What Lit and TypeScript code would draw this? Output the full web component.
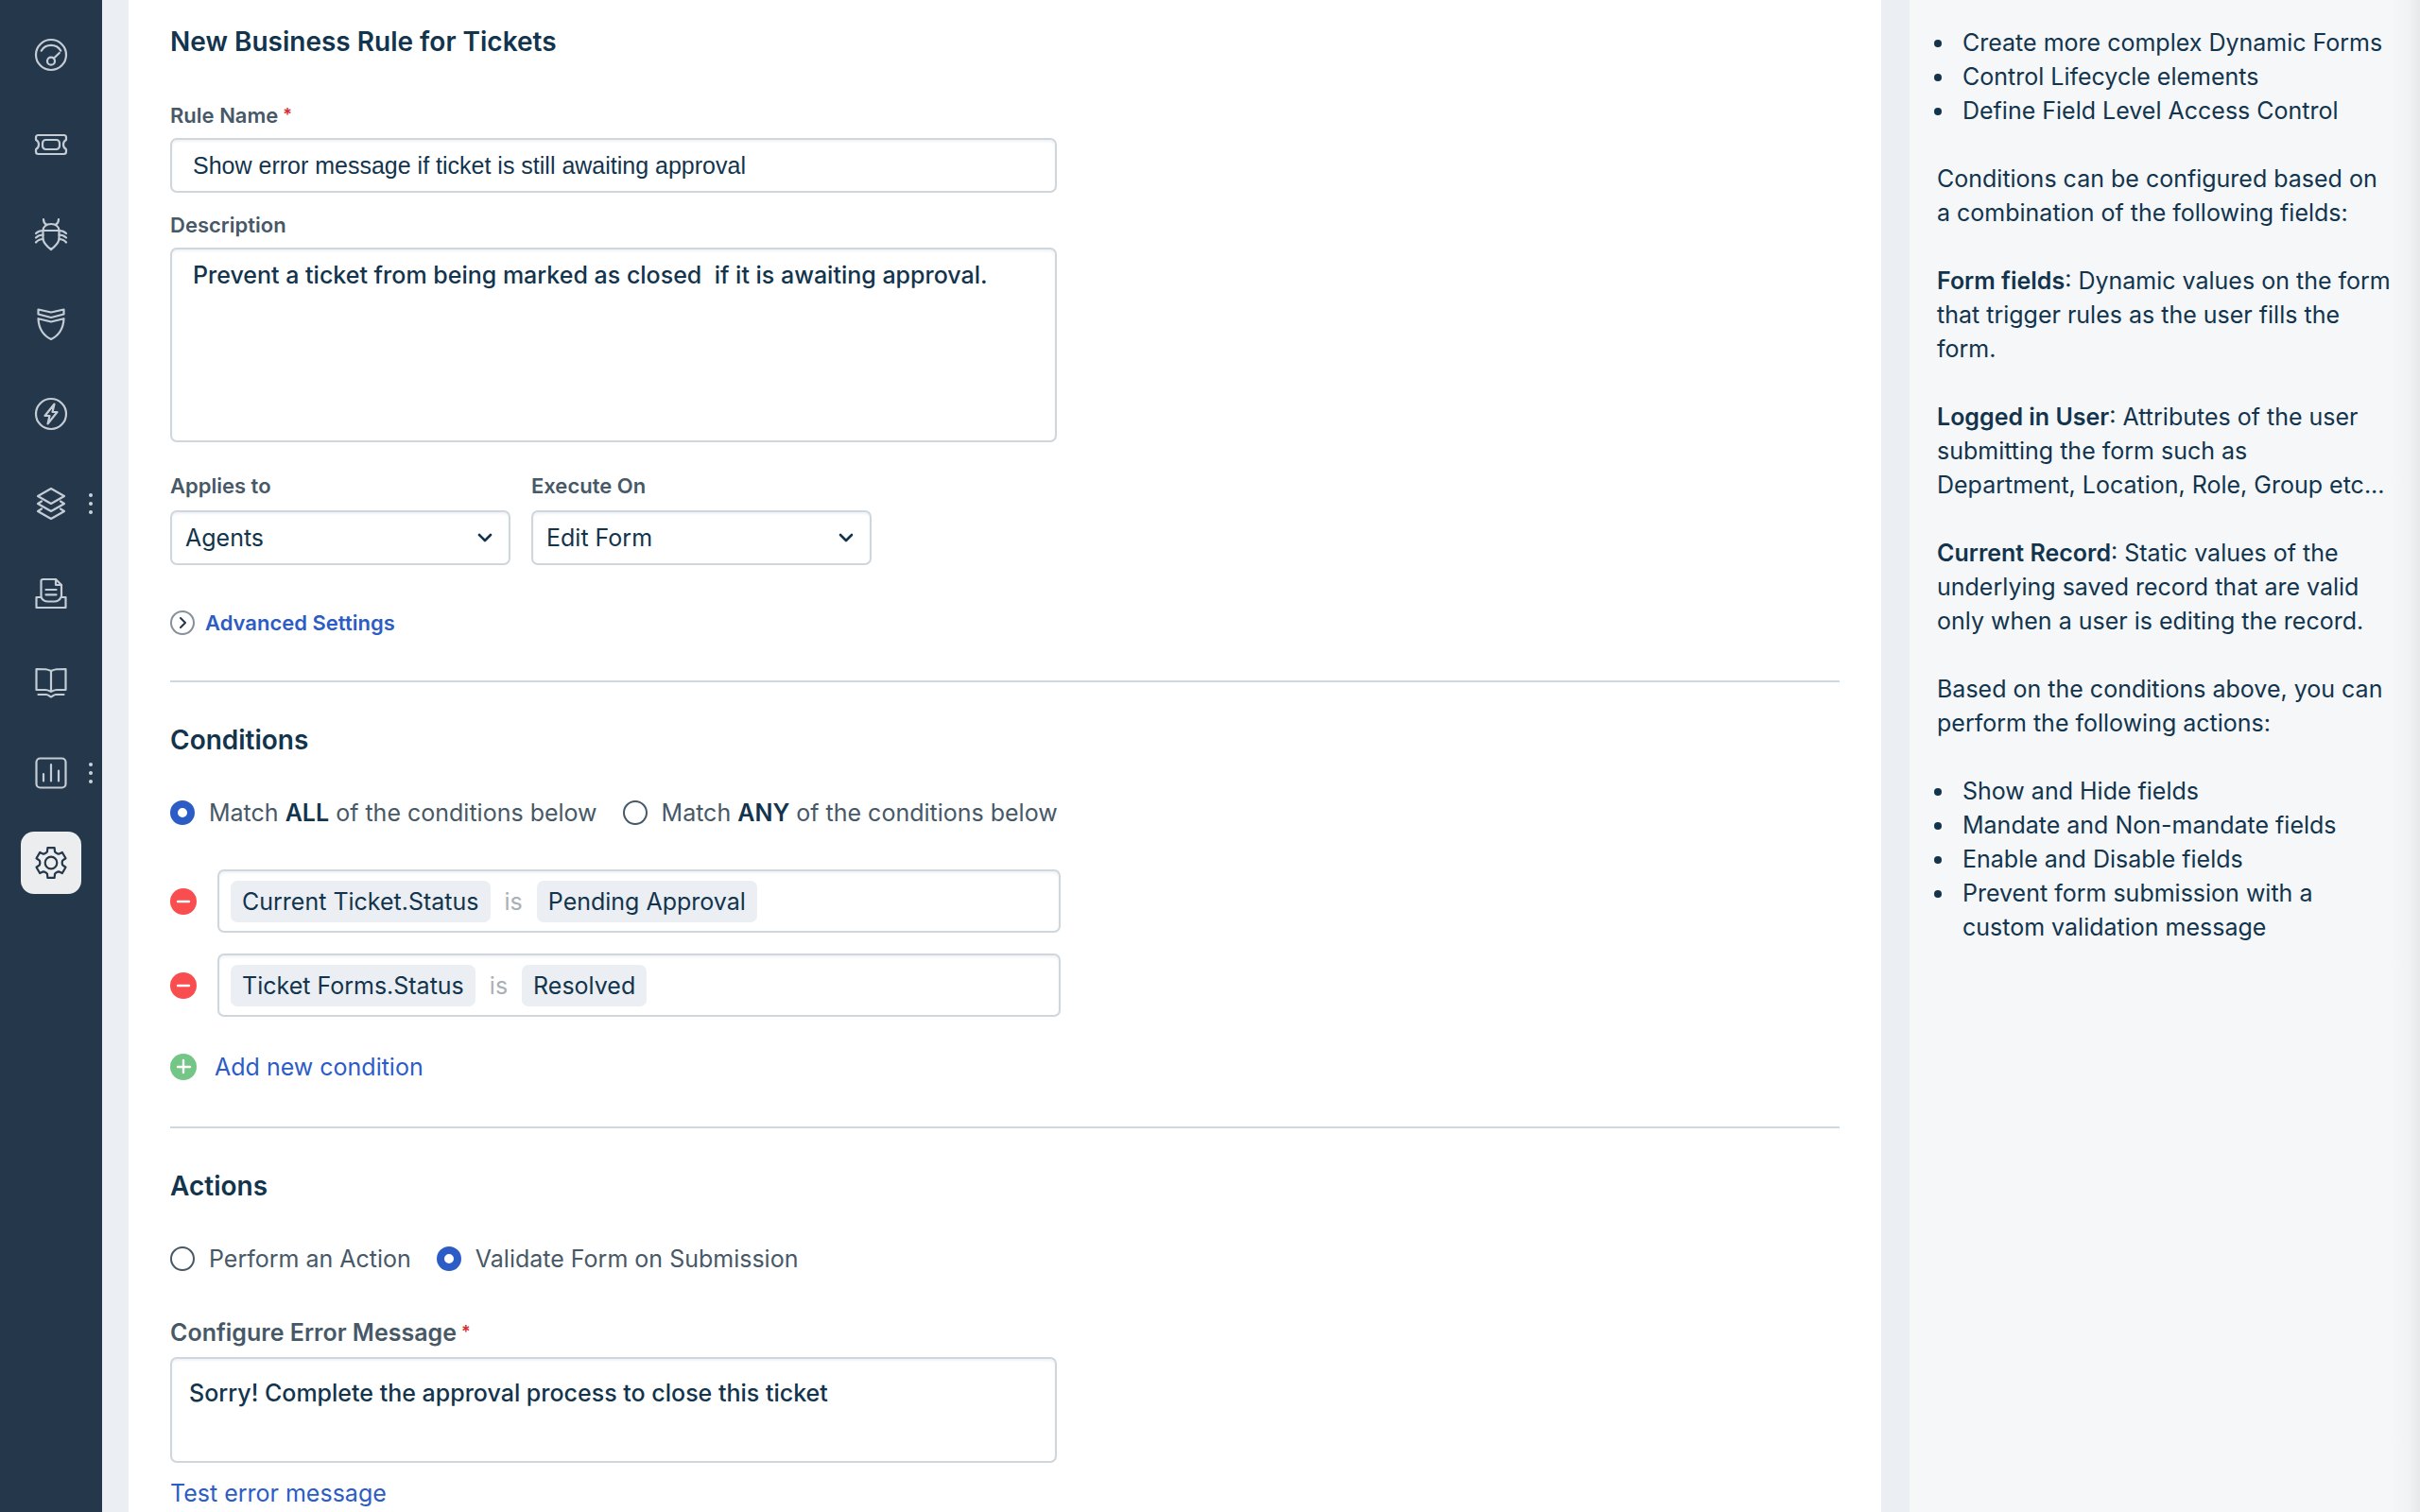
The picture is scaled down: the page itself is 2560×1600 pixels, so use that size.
import { LitElement, html, css, svg, type TemplateResult } from "lit";
import { customElement, property, state } from "lit/decorators.js";
import { classMap } from "lit/directives/class-map.js";

/* Outline of a six-toothed cog centred on 0,0. */
const cogPath = (): string => {
  const pts: string[] = [];
  for (let k = 0; k < 6; k++) {
    const a = k * 60 - 90;
    for (const [d, r] of [[-25, 11.8], [-19, 12.4], [-13, 16.2], [13, 16.2], [19, 12.4], [25, 11.8]]) {
      const t = ((a + d) * Math.PI) / 180;
      pts.push(`${(Math.cos(t) * r).toFixed(2)} ${(Math.sin(t) * r).toFixed(2)}`);
    }
  }
  return `M${pts.join("L")}Z`;
};

const icons: Record<string, TemplateResult> = {
  dashboard: svg`<circle r="16"/><path d="M-10.3 -4.3A12 12 0 0 1 10.3 -4.3"/><circle cy="6.7" r="4"/><path d="M2.8 3.8L8.8 -2"/>`,
  tickets: svg`<path d="M-13.5 -10H13.5A2.5 2.5 0 0 1 16 -7.5V-5C12 -3 12 3 16 5V7.5A2.5 2.5 0 0 1 13.5 10H-13.5A2.5 2.5 0 0 1 -16 7.5V5C-12 3 -12 -3 -16 -5V-7.5A2.5 2.5 0 0 1 -13.5 -10Z"/><rect x="-9" y="-5" width="18" height="10" rx="3.5"/>`,
  problems: svg`<path d="M-8.5 -4C-8.5 -8 -5 -11 0 -11S8.5 -8 8.5 -4Z"/><path d="M-8.5 -4V4C-8.5 9 -4 13 0 16C4 13 8.5 9 8.5 4V-4"/><path d="M-8 -16C-8 -13 -7 -11.5 -5 -10.5M8 -16C8 -13 7 -11.5 5 -10.5"/><path d="M-8.5 -4C-12 -4 -14 -3 -16 -1M-8.5 .5C-12 .5 -14 1.5 -16 3.5M-8.5 5C-12 5 -14 6 -16 8.5M8.5 -4C12 -4 14 -3 16 -1M8.5 .5C12 .5 14 1.5 16 3.5M8.5 5C12 5 14 6 16 8.5"/>`,
  changes: svg`<path d="M-13.5 -15.5L0 -12.5L13.5 -15.5V-10.5L0 -7L-13.5 -10.5Z"/><path d="M-13.5 -5.8L0 -2.5L13.5 -5.8C13 5 8 12 0 16C-8 12 -13 5 -13.5 -5.8Z"/>`,
  releases: svg`<circle r="16"/><path d="M3.5 -10.5L-6.5 2H-1.5L-3.5 10.5L6.5 -2H1.5Z"/>`,
  assets: svg`<path d="M0 -16L14 -8L0 0L-14 -8Z"/><path d="M-10 -2.5L-14 0L0 8L14 0L10 -2.5"/><path d="M-10 5.5L-14 8L0 16L14 8L10 5.5"/>`,
  purchases: svg`<path d="M-10.5 4V-13A2 2 0 0 1 -8.5 -15H5L11 -9V4"/><path d="M5 -15V-9H11"/><path d="M-5.5 -4H5.5M-5.5 1.3H5.5"/><path d="M-15.5 4H-10.5C-9 7 -6 8.5 -3.5 8.5H3.5C6 8.5 9 7 10.5 4H15.5V15H-15.5Z"/>`,
  solutions: svg`<path d="M0 -13C-4 -15 -6 -15 -15.5 -15V7H-6C-3 7 -2 8 0 9C2 8 3 7 6 7H15.5V-15C6 -15 4 -15 0 -13V9"/><path d="M-13.5 12H-5C-3 12 -2 13.5 0 14.5C2 13.5 3 12 5 12H13.5"/>`,
  analytics: svg`<rect x="-15.5" y="-15.5" width="31" height="31" rx="4"/><path d="M-8 1V8.5M0 -9V8.5M8 -2.5V8.5"/>`,
  admin: svg`<path d=${cogPath()}/><circle r="6.3"/>`,
};

@customElement("side-nav")
export class SideNav extends LitElement {
  @property() current = "admin";

  private items = [
    { id: "dashboard", label: "Dashboard" },
    { id: "tickets", label: "Tickets" },
    { id: "problems", label: "Problems" },
    { id: "changes", label: "Changes" },
    { id: "releases", label: "Releases" },
    { id: "assets", label: "Assets", more: true },
    { id: "purchases", label: "Purchase orders" },
    { id: "solutions", label: "Solutions" },
    { id: "analytics", label: "Analytics", more: true },
    { id: "admin", label: "Admin" },
  ];

  static styles = css`
    :host {
      display: block;
      background: #25374a;
    }
    .list {
      display: flex;
      flex-direction: column;
      gap: 29px;
      padding-top: 25px;
    }
    .item {
      display: grid;
      grid-template-columns: 64px 20px;
      padding-left: 22px;
    }
    .link {
      display: grid;
      place-items: center;
      height: 66px;
      border-radius: 14px;
      color: #c4cdd6;
    }
    .link.active {
      background: #ebedef;
      color: #25374a;
    }
    .icon {
      width: 36px;
      height: 36px;
      fill: none;
      stroke: currentColor;
      stroke-width: 2.2;
      stroke-linecap: round;
      stroke-linejoin: round;
    }
    .more {
      display: grid;
      place-items: center;
      padding: 0;
      border: 0;
      background: none;
    }
    .dots {
      width: 4px;
      height: 22px;
      fill: #cdd5dc;
    }
  `;

  render() {
    return html`<nav class="list" aria-label="Main">
      ${this.items.map(
        (i) => html`<div class="item">
          <a class=${classMap({ link: true, active: i.id === this.current })} href="#${i.id}" aria-label=${i.label}>
            <svg class="icon" viewBox="-18 -18 36 36">${icons[i.id]}</svg>
          </a>
          ${i.more
            ? html`<button class="more" type="button" aria-label="More">
                <svg class="dots" viewBox="0 0 4 22"><circle cx="2" cy="2" r="2"/><circle cx="2" cy="11" r="2"/><circle cx="2" cy="20" r="2"/></svg>
              </button>`
            : ""}
        </div>`
      )}
    </nav>`;
  }
}

@customElement("help-panel")
export class HelpPanel extends LitElement {
  static styles = css`
    :host {
      display: block;
      box-sizing: border-box;
      padding: 27px 30px 0 29px;
      background: linear-gradient(to left, #e6e8ea, #f0f2f4 12px, #f5f7f9 32px);
      color: #12344d;
      font-size: 25px;
      line-height: 36px;
    }
    .para {
      margin: 0 0 36px;
    }
    .bullets {
      margin: 0 0 36px -3px;
      padding: 0;
      list-style: none;
    }
    .bullet {
      display: grid;
      grid-template-columns: 8px 1fr;
      gap: 22px;
    }
    .bullet::before {
      content: "";
      height: 8px;
      margin-top: 15px;
      border-radius: 50%;
      background: #12344d;
    }
    .term {
      font-weight: 600;
    }
  `;

  private bullets(items: string[]) {
    return html`<ul class="bullets">${items.map((t) => html`<li class="bullet">${t}</li>`)}</ul>`;
  }

  render() {
    return html`
      ${this.bullets(["Create more complex Dynamic Forms", "Control Lifecycle elements", "Define Field Level Access Control"])}
      <p class="para">Conditions can be configured based on a combination of the following fields:</p>
      <p class="para"><b class="term">Form fields</b>: Dynamic values on the form that trigger rules as the user fills the form.</p>
      <p class="para"><b class="term">Logged in User</b>: Attributes of the user submitting the form such as Department, Location, Role, Group etc...</p>
      <p class="para"><b class="term">Current Record</b>: Static values of the underlying saved record that are valid only when a user is editing the record.</p>
      <p class="para">Based on the conditions above, you can perform the following actions:</p>
      ${this.bullets([
        "Show and Hide fields",
        "Mandate and Non-mandate fields",
        "Enable and Disable fields",
        "Prevent form submission with a custom validation message",
      ])}
    `;
  }
}

@customElement("rule-form")
export class RuleForm extends LitElement {
  @state() private conditions = [
    { field: "Current Ticket.Status", op: "is", value: "Pending Approval" },
    { field: "Ticket Forms.Status", op: "is", value: "Resolved" },
  ];

  static styles = css`
    :host {
      display: block;
      box-sizing: border-box;
      padding: 26px 44px 0;
      background: #fff;
      color: #12344d;
    }
    .title {
      margin: 0;
      font-size: 28px;
      line-height: 36px;
      font-weight: 600;
    }
    .label {
      display: flex;
      gap: 5px;
      color: #475867;
      font-size: 22px;
      line-height: 28px;
      font-weight: 600;
    }
    .large {
      font-size: 25px;
      line-height: 32px;
    }
    .star {
      color: #d72d30;
      font-size: 18px;
    }
    .field {
      display: flex;
      flex-direction: column;
      gap: 10px;
      max-width: 938px;
    }
    .first {
      margin-top: 46px;
    }
    .second {
      margin-top: 20px;
    }
    .box {
      box-sizing: border-box;
      width: 100%;
      margin: 0;
      border: 2px solid #cfd6dc;
      border-radius: 7px;
      background: #fff;
      box-shadow: inset 0 2px 3px #eef2f6;
      color: #12344d;
      font-family: inherit;
      font-size: 25px;
      line-height: 36px;
      outline: none;
      resize: none;
    }
    .text {
      height: 58px;
      padding: 0 22px;
      font-family: "Liberation Sans", Arial, sans-serif;
    }
    .area {
      display: block;
      padding: 9px 22px 13px;
      font-weight: 500;
    }
    .roomy {
      padding: 18px;
    }
    .pair {
      display: flex;
      gap: 22px;
      margin-top: 32px;
    }
    .choice {
      display: flex;
      flex-direction: column;
      gap: 12px;
      width: 360px;
    }
    .picker {
      display: grid;
      align-items: center;
    }
    .picker > * {
      grid-area: 1 / 1;
    }
    .drop {
      height: 58px;
      padding: 0 14px;
      appearance: none;
    }
    .chevron {
      justify-self: end;
      width: 16px;
      height: 10px;
      margin-right: 19px;
      fill: none;
      stroke: #12344d;
      stroke-width: 2.6;
      stroke-linecap: round;
      stroke-linejoin: round;
      pointer-events: none;
    }
    .plain {
      display: flex;
      align-items: center;
      padding: 0;
      border: 0;
      background: none;
      color: #2c5cc5;
      font-family: inherit;
      font-size: 25px;
      line-height: 32px;
      text-decoration: none;
    }
    .advanced {
      gap: 11px;
      margin-top: 45px;
      font-size: 22px;
      font-weight: 600;
    }
    .ring {
      width: 26px;
      height: 26px;
      fill: none;
      stroke: #84909a;
      stroke-width: 2;
      stroke-linecap: round;
      stroke-linejoin: round;
    }
    .rule {
      height: 2px;
      margin: 45px 0 43px;
      border: 0;
      background: #cfd7df;
    }
    .radios {
      display: flex;
      margin: 43px 0 0;
      padding: 0;
      border: 0;
    }
    .option {
      display: flex;
      align-items: center;
      gap: 15px;
      margin-right: 27px;
      color: #475867;
      font-size: 25px;
      line-height: 32px;
    }
    .strong {
      color: #12344d;
      font-weight: 600;
    }
    .radio {
      box-sizing: border-box;
      width: 26px;
      height: 26px;
      margin: 0;
      border: 2px solid #475867;
      border-radius: 50%;
      appearance: none;
    }
    .radio:checked {
      border: 8px solid #2c5cc5;
    }
    .rows {
      display: flex;
      flex-direction: column;
      gap: 22px;
      max-width: 942px;
      margin-top: 44px;
    }
    .row {
      display: flex;
      align-items: center;
      gap: 22px;
    }
    .mark {
      display: block;
      width: 28px;
      height: 28px;
      stroke: #fff;
      stroke-width: 2.4;
      stroke-linecap: round;
    }
    .tokens {
      display: flex;
      align-items: center;
      gap: 15px;
      height: 67px;
      padding: 0 12px;
    }
    .token {
      padding: 6px 12px;
      border: 0;
      border-radius: 7px;
      background: #ebeff3;
      color: #12344d;
      font-family: inherit;
      font-size: 25px;
      line-height: 32px;
    }
    .op {
      color: #a9b0b6;
    }
    .add {
      gap: 19px;
      margin: 37px 0 47px;
    }
    .message {
      margin-top: 46px;
    }
    .after {
      display: inline-flex;
      margin-top: 16px;
    }
  `;

  private option(group: string, checked: boolean, text: TemplateResult) {
    return html`<label class="option"><input class="radio" type="radio" name=${group} ?checked=${checked} /><span>${text}</span></label>`;
  }

  private picker(id: string, label: string, values: string[]) {
    return html`<div class="choice">
      <label class="label" for=${id}>${label}</label>
      <div class="picker">
        <select class="box drop" id=${id}>${values.map((v) => html`<option>${v}</option>`)}</select>
        <svg class="chevron" viewBox="0 0 16 10" aria-hidden="true"><path d="M2 2l6 6 6-6"/></svg>
      </div>
    </div>`;
  }

  private remove(index: number) {
    this.conditions = this.conditions.filter((_, i) => i !== index);
  }

  render() {
    return html`<form>
      <h2 class="title">New Business Rule for Tickets</h2>
      <div class="field first">
        <label class="label" for="name">Rule Name<span class="star">*</span></label>
        <input class="box text" id="name" type="text" .value=${"Show error message if ticket is still awaiting approval"} />
      </div>
      <div class="field second">
        <label class="label" for="description">Description</label>
        <textarea class="box area" id="description" rows="5" .value=${"Prevent a ticket from being marked as closed  if it is awaiting approval."}></textarea>
      </div>
      <div class="pair">
        ${this.picker("applies", "Applies to", ["Agents"])} ${this.picker("execute", "Execute On", ["Edit Form"])}
      </div>
      <button class="plain advanced" type="button">
        <svg class="ring" viewBox="0 0 26 26" aria-hidden="true"><circle cx="13" cy="13" r="12"/><path d="M11 8l5 5-5 5" stroke="#25374a"/></svg>
        Advanced Settings
      </button>
      <hr class="rule" />

      <h2 class="title">Conditions</h2>
      <fieldset class="radios" aria-label="Match">
        ${this.option("match", true, html`Match <b class="strong">ALL</b> of the conditions below`)}
        ${this.option("match", false, html`Match <b class="strong">ANY</b> of the conditions below`)}
      </fieldset>
      <div class="rows">
        ${this.conditions.map(
          (c, i) => html`<div class="row">
            <button class="plain" type="button" aria-label="Remove condition" @click=${() => this.remove(i)}>
              <svg class="mark" viewBox="0 0 28 28"><circle cx="14" cy="14" r="14" fill="#f94d4f" stroke="none"/><path d="M8 14h12"/></svg>
            </button>
            <div class="box tokens">
              <button class="token" type="button">${c.field}</button>
              <span class="op">${c.op}</span>
              <button class="token" type="button">${c.value}</button>
            </div>
          </div>`
        )}
      </div>
      <button class="plain add" type="button">
        <svg class="mark" viewBox="0 0 28 28" aria-hidden="true"><circle cx="14" cy="14" r="14" fill="#74c686" stroke="none"/><path d="M8 14h13M14 7v13"/></svg>
        Add new condition
      </button>
      <hr class="rule" />

      <h2 class="title">Actions</h2>
      <fieldset class="radios" aria-label="Action type">
        ${this.option("action", false, html`Perform an Action`)}
        ${this.option("action", true, html`Validate Form on Submission`)}
      </fieldset>
      <div class="field message">
        <label class="label large" for="error">Configure Error Message<span class="star">*</span></label>
        <textarea class="box area roomy" id="error" rows="2" .value=${"Sorry! Complete the approval process to close this ticket"}></textarea>
      </div>
      <a class="plain after" href="#test">Test error message</a>
    </form>`;
  }
}

@customElement("app-root")
export class AppRoot extends LitElement {
  static styles = css`
    :host {
      display: grid;
      grid-template-columns: 108px minmax(0, 1fr) 540px;
      height: 100vh;
      overflow: hidden;
      background: #ebeef3;
      font-family: Inter, "Liberation Sans", sans-serif;
    }
    .main {
      margin: 0 30px 0 28px;
    }
  `;

  render() {
    return html`<side-nav></side-nav><rule-form class="main"></rule-form><help-panel></help-panel>`;
  }
}
